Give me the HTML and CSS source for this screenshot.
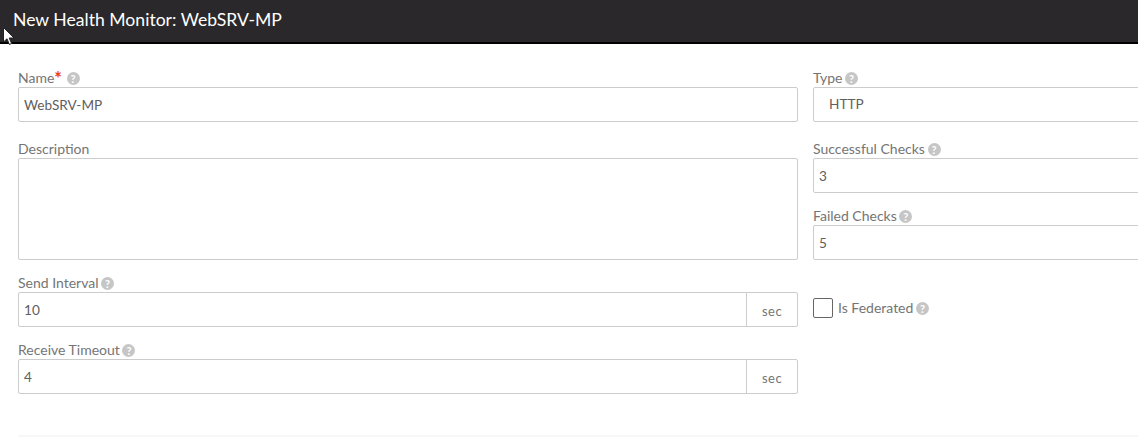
FILE: index.html
```html
<!DOCTYPE html>
<html lang="en">
<head>
  <meta charset="UTF-8" />
  <title>New Health Monitor</title>
  <link rel="stylesheet" href="styles.css">
</head>
<body>
  <div class="modal">
    <div class="modal-header">New Health Monitor: WebSRV-MP</div>

    <svg class="cursor" width="12" height="19" viewBox="0 0 12 19">
      <path d="M0.5 0.5 L0.5 15 L4 11.8 L6.4 17.5 L8.6 16.5 L6.2 11 L11 11 Z" fill="#fff" stroke="#222" stroke-width="1"/>
    </svg>

    <form class="modal-body">
      <div class="form-row form-row-first">
        <div class="col-left">
          <label class="field-label">Name<span class="required">*</span> <span class="help">?</span></label>
          <input class="text-input" type="text" value="WebSRV-MP" />
        </div>
        <div class="col-right">
          <label class="field-label">Type <span class="help">?</span></label>
          <div class="text-input select-value">HTTP</div>
        </div>
      </div>

      <div class="form-row">
        <div class="col-left">
          <label class="field-label">Description</label>
          <textarea class="text-area"></textarea>
        </div>
        <div class="col-right">
          <label class="field-label">Successful Checks <span class="help">?</span></label>
          <input class="text-input" type="text" value="3" />
          <label class="field-label field-next">Failed Checks <span class="help">?</span></label>
          <input class="text-input" type="text" value="5" />
        </div>
      </div>

      <div class="form-row">
        <div class="col-left">
          <label class="field-label">Send Interval <span class="help">?</span></label>
          <div class="input-group">
            <input class="text-input" type="text" value="10" />
            <span class="unit">sec</span>
          </div>
        </div>
        <div class="col-right checkbox-row">
          <span class="checkbox"></span>
          <span class="checkbox-label">Is Federated <span class="help">?</span></span>
        </div>
      </div>

      <div class="form-row">
        <div class="col-left">
          <label class="field-label">Receive Timeout <span class="help">?</span></label>
          <div class="input-group">
            <input class="text-input" type="text" value="4" />
            <span class="unit">sec</span>
          </div>
        </div>
      </div>

      <div class="modal-footer"></div>
    </form>
  </div>
</body>
</html>
```

FILE: styles.css
```css
html, body {
  margin: 0;
  padding: 0;
  height: 437px;
  overflow: hidden;
  background: #fff;
}

body {
  font-family: Lato, "Open Sans", sans-serif;
  font-size: 14px;
  color: #666;
}

.modal {
  position: relative;
  width: 1138px;
  height: 437px;
  overflow: hidden;
}

.modal-header {
  height: 42px;
  line-height: 40px;
  padding-left: 13px;
  background: #2a282b;
  border-bottom: 2px solid #000;
  color: #fff;
  font-size: 17.6px;
}

.cursor {
  position: absolute;
  left: 3px;
  top: 27px;
}

.modal-body {
  padding: 25px 0 0 18px;
}

.form-row {
  display: flex;
  gap: 15px;
  margin-bottom: 14px;
}

.form-row-first {
  margin-bottom: 18px;
}

.col-left {
  width: 780px;
  flex: none;
}

.col-right {
  width: 340px;
  flex: none;
}

.field-label {
  display: block;
  height: 18px;
  line-height: 18px;
  color: #757575;
}

.field-next {
  margin-top: 14px;
}

.required {
  font-size: 18px;
  line-height: 14px;
  margin-right: 2px;
  vertical-align: -2px;
  color: #e8410c;
  font-weight: bold;
}

.help {
  display: inline-block;
  width: 13px;
  height: 13px;
  margin-left: -1px;
  border-radius: 50%;
  background: #c6c6c6;
  color: #fff;
  font-size: 11px;
  font-weight: bold;
  line-height: 13px;
  text-align: center;
  vertical-align: 0;
}

.text-input {
  display: block;
  box-sizing: border-box;
  width: 100%;
  height: 35px;
  padding: 0 5px;
  border: 1px solid #ccc;
  border-radius: 2px;
  background: #fff;
  font-family: inherit;
  font-size: 13.6px;
  line-height: 33px;
  color: #606060;
}

.select-value {
  padding-left: 15px;
}

.text-area {
  display: block;
  box-sizing: border-box;
  width: 100%;
  height: 102px;
  border: 1px solid #ccc;
  border-radius: 2px;
  resize: none;
}

.input-group {
  display: flex;
}

.input-group .text-input {
  flex: 1;
  border-radius: 2px 0 0 2px;
}

.unit {
  box-sizing: border-box;
  width: 52px;
  height: 35px;
  line-height: 36px;
  border: 1px solid #ccc;
  border-radius: 0 2px 2px 0;
  margin-left: -1px;
  text-align: center;
  font-size: 13px;
  letter-spacing: 0.5px;
  color: #757575;
}

.checkbox-row {
  display: flex;
  align-items: center;
  gap: 5px;
  height: 35px;
  margin-top: 16px;
}

.checkbox {
  box-sizing: border-box;
  width: 20px;
  height: 20px;
  border: 1px solid #666;
  border-radius: 2px;
}

.checkbox-label {
  color: #757575;
}

.modal-footer {
  margin-top: 41px;
  border-top: 2px solid #f7f7f7;
}
```
